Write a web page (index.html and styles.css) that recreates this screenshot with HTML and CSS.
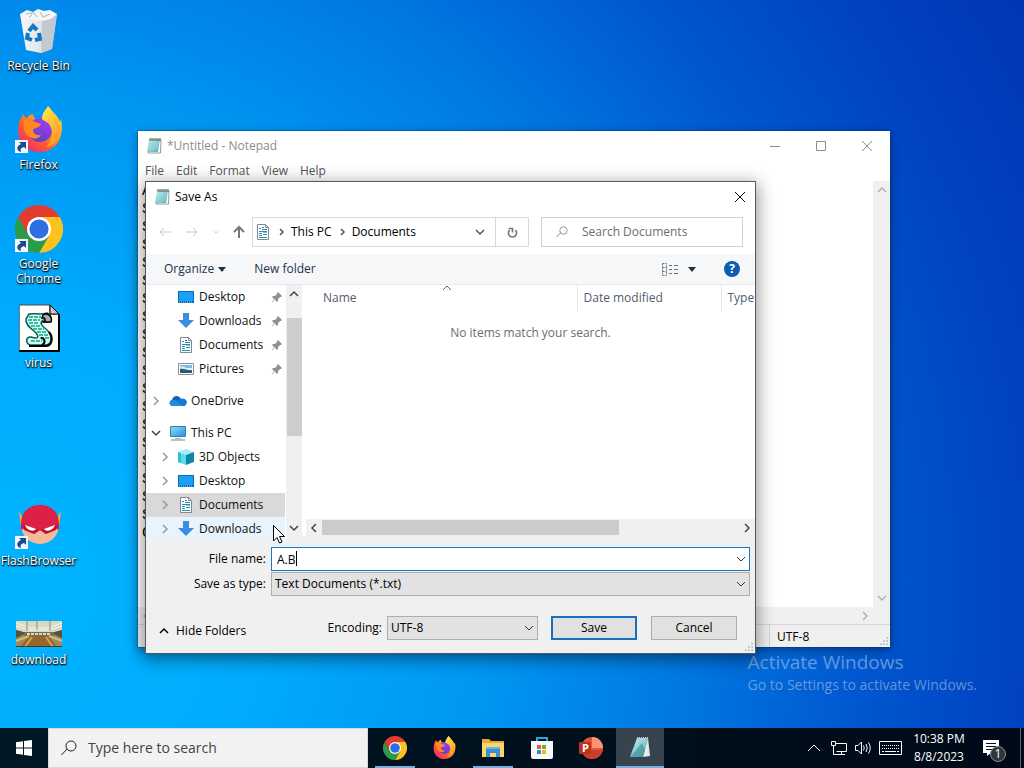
FILE: index.html
```html
<!DOCTYPE html>
<html lang="en">
<head>
  <meta charset="UTF-8">
  <meta name="viewport" content="width=device-width, initial-scale=1.0">
  <title>Desktop</title>
  <link rel="stylesheet" href="styles.css">
</head>
<body>
  <!-- Shared icons -->
  <svg class="sprite" aria-hidden="true">
    <defs>
      <linearGradient id="foxBody" x1="1" y1="0" x2="0.2" y2="1">
        <stop offset="0" stop-color="#fff14a"/>
        <stop offset="0.4" stop-color="#ffa52a"/>
        <stop offset="0.7" stop-color="#ff5a2c"/>
        <stop offset="1" stop-color="#f2237a"/>
      </linearGradient>
      <linearGradient id="foxTail" x1="0" y1="0" x2="0.6" y2="1">
        <stop offset="0" stop-color="#fff04a"/>
        <stop offset="1" stop-color="#ff9a24"/>
      </linearGradient>
      <linearGradient id="foxGlobe" x1="0.7" y1="0" x2="0.2" y2="1">
        <stop offset="0" stop-color="#a23cf0"/>
        <stop offset="1" stop-color="#5b3fc4"/>
      </linearGradient>
      <linearGradient id="padFill" x1="0" y1="0" x2="1" y2="1">
        <stop offset="0" stop-color="#c4eff0"/>
        <stop offset="1" stop-color="#58adb4"/>
      </linearGradient>
      <linearGradient id="binFill" x1="0" y1="0" x2="1" y2="0">
        <stop offset="0" stop-color="#f4f6f8"/>
        <stop offset="0.65" stop-color="#dfe3e8"/>
        <stop offset="1" stop-color="#b3bac2"/>
      </linearGradient>
      <linearGradient id="screenFill" x1="0" y1="0" x2="1" y2="1">
        <stop offset="0" stop-color="#8adcfb"/>
        <stop offset="1" stop-color="#2495dc"/>
      </linearGradient>
    </defs>

    <symbol id="i-bin" viewBox="0 0 48 48">
      <path d="M5 7 L42 7 L37 42 L26 46 L11 43 Z" fill="url(#binFill)"/>
      <path d="M27 12 L42 7 L37 42 L26 46 Z" fill="#c3c9d0"/>
      <path d="M5 7 L12 3 L18 5 L23 2 L29 4 L35 3 L42 7 L36 12 L27 14 L13 12 Z" fill="#f4f6f8"/>
      <path d="M11 7 L19 6 L22 10 M25 5 L28 10 L35 7 M14 10 L17 8" stroke="#a9b1ba" fill="none"/>
      <g fill="none" stroke="#1477c4" stroke-width="4">
        <path d="M14 24 L18 19 L22 23"/>
        <path d="M24 26 L25 32 L20 33"/>
        <path d="M17 33 L12 31 L13 26"/>
      </g>
    </symbol>

    <symbol id="i-firefox" viewBox="0 0 48 48">
      <path d="M4 17 C5 13 7 10 8 8 C9 10 10 12 12 12 C14 9 16 8 18 8 C18 11 20 13 23 14 L26 17 C27 7 32 3 33 0 C36 5 43 9 45 16 L46 13 C49 27 45 46 24 46 C10 46 0 34 4 17 Z" fill="url(#foxBody)"/>
      <circle cx="25" cy="24" r="12" fill="url(#foxGlobe)"/>
      <path d="M27 13 C27 6 32 3 33 0 C38 7 46 13 45 26 C44 35 38 40 31 41 C38 35 39 25 34 18 C31 15 29 15 27 13 Z" fill="url(#foxTail)"/>
      <path d="M8 15 C12 12 18 15 26 18 C25 22 20 21 18 24 C18 27 21 30 26 29 C23 35 11 33 9 23 Z" fill="#ff8a20"/>
    </symbol>

    <symbol id="i-chrome" viewBox="0 0 48 48">
      <path d="M24 12 H44.8 A24 24 0 0 1 24 48 L34.4 30 Z" fill="#fcc31e"/>
      <path d="M3.2 12 L13.6 30 L24 36 L34.4 30 L24 48 A24 24 0 0 1 3.2 12 Z" fill="#2c9b48"/>
      <path d="M3.2 12 A24 24 0 0 1 44.8 12 H24 L13.6 30 Z" fill="#e33b2e"/>
      <circle cx="24" cy="24" r="12" fill="#fff"/>
      <circle cx="24" cy="24" r="9.6" fill="#2d6fe0"/>
    </symbol>

    <symbol id="i-script" viewBox="0 0 48 48">
      <path d="M5 1 H35 L44 10 V47 H5 Z" fill="#fff"/>
      <path d="M4 1 H35 V10 H44" fill="none" stroke="#444"/>
      <path d="M35 1 L44 10 H35 Z" fill="#c8c8c8" stroke="#000"/>
      <path d="M44 10 V47 H4" fill="none" stroke="#000" stroke-width="2"/>
      <path d="M4 1 V47" stroke="#777"/>
      <path d="M14 10 C18 9 27 11 32 9 C36 10 37 17 34 18 H28 V16 C24 19 27 22 31 25 C37 30 38 40 31 41 H15 C10 39 11 32 16 33 C22 35 25 34 21 29 C17 25 10 21 11 15 Z" fill="#d3fbf2" stroke="#055f56" stroke-width="1.5"/>
      <path d="M14 13 H26 M13 16 H25 M14 19 H24 M16 22 H26 M18 25 H29 M22 28 H32 M24 31 H34 M25 34 H34 M16 37 H27" stroke="#0fa68c" stroke-width="1.5" stroke-dasharray="4 1"/>
      <path d="M28 11 C32 8 38 12 36 18 H29 C31 16 30 13 27 14 Z" fill="#aaa" stroke="#000" stroke-width="1.5"/>
      <path d="M34 28 C39 34 37 43 29 42 H14 M26 34 C30 34 31 39 27 41" fill="none" stroke="#000" stroke-width="2"/>
    </symbol>

    <symbol id="i-flash" viewBox="0 0 48 48">
      <path d="M4 9 L10 20 V28 L6 25 Z M46 9 L40 20 V28 L44 25 Z" fill="#f4b62a"/>
      <circle cx="25" cy="23" r="19" fill="#f6b998"/>
      <path d="M6 28 V22 C6 10 14 3 25 3 C36 3 44 10 44 22 V28 L39 25 L31 32 L25 28 L19 32 L11 25 Z" fill="#df2046"/>
      <path d="M6 22 L20 27 L25 28 L30 27 L44 22 L41 28 L31 32 L25 28 L19 32 L9 28 Z" fill="#b81538"/>
      <path d="M10 23 L21 27 C19 30 12 29 10 23 Z M40 23 L29 27 C31 30 38 29 40 23 Z" fill="#fff"/>
    </symbol>

    <symbol id="i-photo" viewBox="0 -5 48 48">
      <path d="M1 15 H47 V41 H1 Z" fill="#9c8a62"/>
      <path d="M1 15 H47 V24 L36 27 H12 L1 24 Z" fill="#d9d8c4"/>
      <path d="M1 17 L16 22 H32 L47 17 M1 20 L14 24 H34 L47 20" stroke="#f6f6ea" fill="none"/>
      <path d="M12 15 V25 M22 15 V24 M35 15 V25" stroke="#8a8c74"/>
      <path d="M1 24 L12 27 L1 32 Z M47 24 L36 27 L47 32 Z" fill="#55533e"/>
      <path d="M9 26 H39 V30 H9 Z" fill="#71705a"/>
      <path d="M12 28 H36" stroke="#ddd8bd" stroke-width="2" stroke-dasharray="3 1"/>
      <path d="M14 30 H34 L42 41 H5 Z" fill="#96662e"/>
      <path d="M17 31 L10 41 M31 31 L38 41" stroke="#d0a552" stroke-width="2"/>
      <path d="M1 35 L14 30 M47 35 L34 30" stroke="#d6bd7a" stroke-width="2"/>
      <path d="M1 40.500 H47" stroke="#4c3a1c"/>
    </symbol>

    <symbol id="i-shortcut" viewBox="0 0 13 13">
      <path d="M0 0 H13 V13 H0 Z" fill="#f5f8fb"/>
      <path d="M4 2 H11 V9 L9 7 C6 8 5 9 6 12 C1 11 1 6 6 4 Z" fill="#1b4a94"/>
    </symbol>

    <symbol id="i-notepad" viewBox="0 0 16 16">
      <path d="M4 2 H15 L14.500 15 H2 Z" fill="#fff" stroke="#8c9a9c"/>
      <path d="M3 2 H14 L12 14 H1 Z" fill="url(#padFill)"/>
      <path d="M4 0 V3 M6 0 V3 M8 0 V3 M10 0 V3 M12 0 V3 M14 0 V3" stroke="#47595c"/>
      <path d="M4 6 H12 M3 9 H12 M3 11 H11" stroke="#a4dfe1" stroke-width="0.6"/>
    </symbol>

    <symbol id="i-desktop" viewBox="0 0 16 16">
      <path d="M0 2 H16 V14 H0 Z" fill="#0a6cc0"/>
      <path d="M1 3 H15 V12 H1 Z" fill="#1ba0f5"/>
      <path d="M1 13 H15" stroke="#8fd0ff" stroke-dasharray="1 1"/>
    </symbol>

    <symbol id="i-download" viewBox="0 0 16 16">
      <path d="M5 0 H11 V7 H16 L8 15 L0 7 H5 Z" fill="#3b8ede"/>
    </symbol>

    <symbol id="i-doc" viewBox="0 0 16 16">
      <path d="M2.5 0.5 H10.500 L13.500 3.500 V15.500 H2.500 Z" fill="#fff" stroke="#7d8a8f"/>
      <path d="M10.500 0.500 V3.500 H13.500" fill="none" stroke="#7d8a8f"/>
      <path d="M4 4.500 H6 M7 3.500 H9 M7 5.500 H12 M4 7.500 H12 M4 9.500 H7 M8 10.500 H12 M4 11.500 H7 M4 13.500 H12" stroke="#2b8fb5"/>
      <path d="M8 8.500 H12" stroke="#7ac3c9"/>
    </symbol>

    <symbol id="i-picture" viewBox="0 0 16 16">
      <path d="M0.500 2.500 H15.500 V13.500 H0.500 Z" fill="#fff" stroke="#8b9196"/>
      <path d="M2 4 H14 V12 H2 Z" fill="#7cbdec"/>
      <path d="M2 6 C5 5 7 6 8 7 H14 V9 H2 Z" fill="#dff0fa"/>
      <path d="M2 8 C6 7 10 10 14 9 V12 H2 Z" fill="#2c5b78"/>
    </symbol>

    <symbol id="i-cloud" viewBox="0 0 18 16">
      <path d="M4 13 C0 13 -0.500 8 3 7 C4 3 9 1 12 6 C16 5 18 8 17.500 10 C17 12 16 13 14 13 Z" fill="#0a63b8"/>
      <path d="M3 7 C6 6 8 8 10 9 L16 13 H4 C0 13 -0.500 8 3 7 Z" fill="#1a8ee4"/>
      <path d="M12 6 C16 5 18 8 17.500 10 C17 12 16 13 14 13 L8 8 Z" fill="#1479cf"/>
    </symbol>

    <symbol id="i-pc" viewBox="0 0 18 16">
      <path d="M1.500 1.500 H16.500 V11.500 H1.500 Z" fill="url(#screenFill)" stroke="#377fa9"/>
      <path d="M6 13.500 H12" stroke="#a8b8c0"/>
      <path d="M2 15 H16" stroke="#77858d"/>
    </symbol>

    <symbol id="i-cube" viewBox="0 0 16 16">
      <path d="M8 0 L16 3 L8 6 L0 3 Z" fill="#a5eef5"/>
      <path d="M0 3 L8 6 V16 L0 13 Z" fill="#5fdbe6"/>
      <path d="M8 6 L16 3 V13 L8 16 Z" fill="#0f86a8"/>
      <path d="M0 3 L3 4 V14 L0 13 Z" fill="#2fbfd3"/>
    </symbol>

    <symbol id="i-pin" viewBox="0 0 12 12">
      <path d="M7 1 L11 5 L10 6 L9.500 5.700 L7 8 L7 10 L6 11 L3.800 8.600 L1 11.500 L0.500 11 L3.400 8.200 L1 6 L2 5 L4 5 L6.400 2.500 L6 2 Z" fill="#8a9299"/>
    </symbol>

    <symbol id="i-right" viewBox="0 0 10 10">
      <path d="M3 1 L7 5 L3 9" fill="none" stroke="currentColor" stroke-width="1.500"/>
    </symbol>
    <symbol id="i-crumb" viewBox="0 0 10 10">
      <path d="M4 2 L7 5 L4 8" fill="none" stroke="currentColor" stroke-width="1.500"/>
    </symbol>
    <symbol id="i-left" viewBox="0 0 10 10">
      <path d="M7 1 L3 5 L7 9" fill="none" stroke="currentColor" stroke-width="1.500"/>
    </symbol>
    <symbol id="i-down" viewBox="0 0 10 10">
      <path d="M1 3 L5 7 L9 3" fill="none" stroke="currentColor" stroke-width="1.500"/>
    </symbol>
    <symbol id="i-thin-down" viewBox="0 0 10 10">
      <path d="M1 3 L5 7 L9 3" fill="none" stroke="currentColor"/>
    </symbol>
    <symbol id="i-up" viewBox="0 0 10 10">
      <path d="M1 7 L5 3 L9 7" fill="none" stroke="currentColor" stroke-width="1.500"/>
    </symbol>
    <symbol id="i-thin-up" viewBox="0 0 10 10">
      <path d="M1 7 L5 3 L9 7" fill="none" stroke="currentColor"/>
    </symbol>
    <symbol id="i-caret" viewBox="0 0 8 5">
      <path d="M0 0 H8 L4 5 Z" fill="currentColor"/>
    </symbol>
    <symbol id="i-search" viewBox="0 0 16 16">
      <circle cx="10" cy="6" r="5" fill="none" stroke="currentColor"/>
      <path d="M6 9 L0.500 15" stroke="currentColor"/>
    </symbol>
    <symbol id="i-close" viewBox="0 0 12 12">
      <path d="M1 1 L11 11 M11 1 L1 11" stroke="currentColor"/>
    </symbol>
    <symbol id="i-grip" viewBox="0 0 10 10">
      <path d="M8 0h2v2h-2z M4 4h2v2h-2z M8 4h2v2h-2z M0 8h2v2h-2z M4 8h2v2h-2z M8 8h2v2h-2z" fill="#b4b4b4"/>
    </symbol>
  </svg>

  <div class="screen">
    <main class="desktop">
      <nav class="shortcuts" aria-label="Desktop icons">
        <a href="#" class="shortcut">
          <span class="shortcut-icon"><svg class="big"><use href="#i-bin"/></svg></span>
          Recycle Bin
        </a>
        <a href="#" class="shortcut">
          <span class="shortcut-icon"><svg class="big"><use href="#i-firefox"/></svg><svg class="arrow"><use href="#i-shortcut"/></svg></span>
          Firefox
        </a>
        <a href="#" class="shortcut">
          <span class="shortcut-icon"><svg class="big"><use href="#i-chrome"/></svg><svg class="arrow"><use href="#i-shortcut"/></svg></span>
          Google Chrome
        </a>
        <a href="#" class="shortcut">
          <span class="shortcut-icon"><svg class="big"><use href="#i-script"/></svg></span>
          virus
        </a>
        <a href="#" class="shortcut row-six">
          <span class="shortcut-icon"><svg class="big"><use href="#i-flash"/></svg><svg class="arrow"><use href="#i-shortcut"/></svg></span>
          FlashBrowser
        </a>
        <a href="#" class="shortcut row-seven">
          <span class="shortcut-icon"><svg class="big"><use href="#i-photo"/></svg></span>
          download
        </a>
      </nav>

      <div class="activate">
        <p class="activate-title">Activate Windows</p>
        <p>Go to Settings to activate Windows.</p>
      </div>

      <section class="window notepad" aria-label="Notepad">
        <header class="titlebar">
          <svg class="icon"><use href="#i-notepad"/></svg>
          <span class="title">*Untitled - Notepad</span>
          <button class="caption" aria-label="Minimize"><svg class="caption-icon" viewBox="0 0 12 12"><path d="M1 6.500 H11" stroke="currentColor"/></svg></button>
          <button class="caption" aria-label="Maximize"><svg class="caption-icon" viewBox="0 0 12 12"><path d="M1.500 1.500 H10.500 V10.500 H1.500 Z" fill="none" stroke="currentColor"/></svg></button>
          <button class="caption" aria-label="Close"><svg class="caption-icon"><use href="#i-close"/></svg></button>
        </header>
        <div class="menubar">
          <button>File</button>
          <button>Edit</button>
          <button>Format</button>
          <button>View</button>
          <button>Help</button>
        </div>
        <div class="editor">
          <textarea class="editor-text" aria-label="Text editor" spellcheck="false">A
S
S
S
S
S
S
S
S
S
S
S
S
S
S
S
S
S
S
C</textarea>
          <div class="vscroll pale">
            <svg class="chev"><use href="#i-up"/></svg>
            <svg class="chev"><use href="#i-down"/></svg>
          </div>
          <div class="hscroll pale">
            <svg class="chev"><use href="#i-left"/></svg>
            <svg class="chev"><use href="#i-right"/></svg>
          </div>
        </div>
        <footer class="statusbar">
          <span class="encoding">UTF-8</span>
          <svg class="grip"><use href="#i-grip"/></svg>
        </footer>
      </section>

      <section class="window dialog" role="dialog" aria-label="Save As">
        <header class="titlebar">
          <svg class="icon"><use href="#i-notepad"/></svg>
          <span class="title">Save As</span>
          <button class="caption" aria-label="Close"><svg class="caption-icon"><use href="#i-close"/></svg></button>
        </header>

        <div class="navbar">
          <div class="nav-buttons">
            <button class="faded" aria-label="Back"><svg class="arrow-icon" viewBox="0 0 14 14"><path d="M13 7 H2 M6 3 L2 7 L6 11" fill="none" stroke="currentColor"/></svg></button>
            <button class="faded" aria-label="Forward"><svg class="arrow-icon" viewBox="0 0 14 14"><path d="M1 7 H12 M8 3 L12 7 L8 11" fill="none" stroke="currentColor"/></svg></button>
            <button class="faded" aria-label="Recent locations"><svg class="tiny"><use href="#i-down"/></svg></button>
            <button aria-label="Up"><svg class="arrow-icon" viewBox="0 0 14 14"><path d="M7 13 V2 M2 7 L7 2 L12 7" fill="none" stroke="currentColor" stroke-width="2"/></svg></button>
          </div>
          <div class="address">
            <svg class="icon"><use href="#i-doc"/></svg>
            <svg class="chev"><use href="#i-crumb"/></svg>
            <a href="#">This PC</a>
            <svg class="chev"><use href="#i-crumb"/></svg>
            <a href="#">Documents</a>
            <button class="address-drop" aria-label="Previous locations"><svg class="chev"><use href="#i-down"/></svg></button>
            <button class="refresh" aria-label="Refresh"><svg class="refresh-icon" viewBox="0 0 16 16"><path d="M11.500 5 A5 5 0 1 1 4.500 5 M3 3 H8 V8" fill="none" stroke="currentColor" stroke-width="2"/></svg></button>
          </div>
          <label class="search">
            <svg class="search-icon"><use href="#i-search"/></svg>
            <input type="text" placeholder="Search Documents" aria-label="Search Documents">
          </label>
        </div>

        <div class="toolbar">
          <button>Organize <svg class="caret"><use href="#i-caret"/></svg></button>
          <button>New folder</button>
          <button class="view" aria-label="Change view">
            <svg class="view-icon" viewBox="0 0 18 13"><path d="M1.500 0.500 H5.500 V12.500 H1.500 Z M1.500 4.500 H5.500 M1.500 8.500 H5.500" fill="none" stroke="#6b7278" stroke-dasharray="2 1"/><path d="M8 2.500 H11 M8 6.500 H11 M8 10.500 H11 M13 2.500 H17 M13 6.500 H17 M13 10.500 H17" stroke="#6b7278"/></svg>
            <svg class="caret"><use href="#i-caret"/></svg>
          </button>
          <button class="help" aria-label="Help">?</button>
        </div>

        <div class="browser">
          <ul class="tree">
            <li class="child"><svg class="icon"><use href="#i-desktop"/></svg>Desktop<svg class="pin"><use href="#i-pin"/></svg></li>
            <li class="child"><svg class="icon"><use href="#i-download"/></svg>Downloads<svg class="pin"><use href="#i-pin"/></svg></li>
            <li class="child"><svg class="icon"><use href="#i-doc"/></svg>Documents<svg class="pin"><use href="#i-pin"/></svg></li>
            <li class="child"><svg class="icon"><use href="#i-picture"/></svg>Pictures<svg class="pin"><use href="#i-pin"/></svg></li>
            <li class="root"><svg class="chev"><use href="#i-right"/></svg><svg class="icon wide"><use href="#i-cloud"/></svg>OneDrive</li>
            <li class="root open"><svg class="chev"><use href="#i-down"/></svg><svg class="icon wide"><use href="#i-pc"/></svg>This PC</li>
            <li class="branch"><svg class="chev"><use href="#i-right"/></svg><svg class="icon"><use href="#i-cube"/></svg>3D Objects</li>
            <li class="branch"><svg class="chev"><use href="#i-right"/></svg><svg class="icon"><use href="#i-desktop"/></svg>Desktop</li>
            <li class="branch selected"><svg class="chev"><use href="#i-right"/></svg><svg class="icon"><use href="#i-doc"/></svg>Documents</li>
            <li class="branch hovered"><svg class="chev"><use href="#i-right"/></svg><svg class="icon"><use href="#i-download"/></svg>Downloads</li>
          </ul>
          <div class="vscroll tree-scroll">
            <svg class="chev"><use href="#i-up"/></svg>
            <div class="vthumb"></div>
            <svg class="chev"><use href="#i-down"/></svg>
          </div>
          <div class="files">
            <div class="files-view">
              <svg class="sort"><use href="#i-thin-up"/></svg>
              <table>
                <thead>
                  <tr><th>Name</th><th class="date">Date modified</th><th class="type">Type</th></tr>
                </thead>
                <tbody>
                  <tr><td colspan="3">No items match your search.</td></tr>
                </tbody>
              </table>
            </div>
            <div class="hscroll">
              <svg class="chev"><use href="#i-left"/></svg>
              <div class="hthumb"></div>
              <svg class="chev"><use href="#i-right"/></svg>
            </div>
          </div>
        </div>

        <form class="form">
          <label for="fileName">File name:</label>
          <div class="field">
            <input id="fileName" type="text" value="A.B">
            <svg class="field-chev"><use href="#i-thin-down"/></svg>
            <span class="text-cursor"></span>
          </div>
          <label for="fileType">Save as type:</label>
          <div class="field">
            <select id="fileType"><option>Text Documents (*.txt)</option></select>
            <svg class="field-chev"><use href="#i-thin-down"/></svg>
          </div>
        </form>

        <footer class="actions">
          <button class="hide-folders"><svg class="chev"><use href="#i-up"/></svg>Hide Folders</button>
          <label for="encoding">Encoding:</label>
          <div class="field encoding-field">
            <select id="encoding"><option>UTF-8</option></select>
            <svg class="field-chev"><use href="#i-thin-down"/></svg>
          </div>
          <button class="push primary">Save</button>
          <button class="push">Cancel</button>
        </footer>
        <svg class="grip"><use href="#i-grip"/></svg>
      </section>

      <svg class="pointer" viewBox="0 0 12 19"><path d="M0.500 0.500 V16 L4 12.500 L6.500 18 L9 17 L6.500 11.500 H11.500 Z" fill="#fff" stroke="#000"/></svg>
    </main>

    <footer class="taskbar">
      <button class="start" aria-label="Start"><svg class="icon" viewBox="0 0 16 16"><path d="M0 2.200 L7 1.200 V7.500 H0 Z M8 1 L16 0 V7.500 H8 Z M0 8.500 H7 V14.800 L0 13.800 Z M8 8.500 H16 V16 L8 15 Z" fill="#fff"/></svg></button>
      <label class="task-search">
        <svg class="icon"><use href="#i-search"/></svg>
        <input type="text" placeholder="Type here to search" aria-label="Type here to search">
      </label>
      <div class="apps">
        <button class="app running" aria-label="Chrome"><svg class="app-icon"><use href="#i-chrome"/></svg></button>
        <button class="app" aria-label="Firefox"><svg class="app-icon"><use href="#i-firefox"/></svg></button>
        <button class="app running" aria-label="File Explorer">
          <svg class="app-icon" viewBox="0 0 24 24"><path d="M1 3 H8 L10 5 H23 V21 H1 Z" fill="#e8a93a"/><path d="M1 7 H23 V21 H1 Z" fill="#fbd76a"/><path d="M5 13 H19 V21 H15 V17 H9 V21 H5 Z" fill="#3e8fd0"/><path d="M5 11 H19 V13 H5 Z" fill="#68b2e8"/></svg>
        </button>
        <button class="app" aria-label="Microsoft Store">
          <svg class="app-icon" viewBox="0 0 24 24"><path d="M7 6 V2 H17 V6" fill="none" stroke="#2aa3e6" stroke-width="2"/><path d="M1 5 H23 V21 Q23 23 21 23 H3 Q1 23 1 21 Z" fill="#f7f9fb"/><path d="M7 9h4v4h-4z" fill="#ec5a2a"/><path d="M12 9h4v4h-4z" fill="#76b02a"/><path d="M7 14h4v4h-4z" fill="#2290dd"/><path d="M12 14h4v4h-4z" fill="#f5b51d"/></svg>
        </button>
        <button class="app" aria-label="PowerPoint">
          <svg class="app-icon" viewBox="0 0 24 24"><circle cx="13" cy="12" r="11" fill="#e0543a"/><path d="M13 1 A11 11 0 0 1 24 12 H13 Z" fill="#ff9273"/><path d="M3 14 H24 A11 11 0 0 1 3 16 Z" fill="#c9402a"/><rect x="0" y="6" width="12" height="12" rx="1" fill="#b9321c"/><text x="3" y="16" class="ppt-letter">P</text></svg>
        </button>
        <button class="app running active" aria-label="Notepad"><svg class="app-icon" viewBox="0 0 24 24"><path d="M9 2 H20 L15 21 H2 Z" fill="url(#padFill)"/><path d="M20 2 L22 20 L15 21 Z" fill="#e3f0f0"/><path d="M9 2 H20" stroke="#c2d4d6" stroke-width="2" stroke-dasharray="1 1"/><path d="M2 21 L14 7 L17 14 L15 21 Z" fill="#2b7f8c" opacity="0.500"/></svg></button>
      </div>
      <div class="tray">
        <svg class="tray-up" viewBox="0 0 14 14"><path d="M1 10 L7 4 L13 10" fill="none" stroke="#fff"/></svg>
        <svg class="icon" viewBox="0 0 16 16"><path d="M4.500 3.500 H15.500 V11.500 H5.500 M10.500 11.500 V14 M6 14.500 H14" fill="none" stroke="#fff"/><path d="M0.500 1.500 H4.500 V5.500 H0.500 Z M2.500 5.500 V14.500 H6" fill="none" stroke="#fff"/></svg>
        <svg class="icon" viewBox="0 0 16 16"><path d="M0.500 5.500 H3 L6.500 2 V14 L3 10.500 H0.500 Z M8.500 5.500 Q10 8 8.500 10.500 M11 4 Q13.500 8 11 12 M13.500 2.500 Q17 8 13.500 13.500" fill="none" stroke="#fff"/></svg>
        <svg class="keyboard" viewBox="0 0 23 14"><path d="M0.500 0.500 H22.500 V13.500 H0.500 Z" fill="none" stroke="#fff"/><path d="M3 4.500 H20 M3 7.500 H20" stroke="#fff" stroke-dasharray="1 1"/><path d="M3 10.500 H5 M6 10.500 H17 M18 10.500 H20" stroke="#fff"/></svg>
        <time class="clock">10:38 PM<br>8/8/2023</time>
        <button class="notices" aria-label="1 notification">
          <svg class="note-icon" viewBox="0 0 18 18"><path d="M1 1 H17 V14 H9 L5 17 V14 H1 Z" fill="#fff"/><path d="M4 4.500 H14 M4 7.500 H14 M4 10.500 H11" stroke="#000f1c"/></svg>
          <span class="badge">1</span>
        </button>
      </div>
    </footer>
  </div>
</body>
</html>
```
FILE: styles.css
```css
* {
  box-sizing: border-box;
}
body {
  margin: 0;
  font-family: "Open Sans", "Noto Sans", sans-serif;
  font-size: 12px;
  line-height: 16px;
  color: #000;
}
button, input, select {
  font: inherit;
  color: inherit;
  margin: 0;
  padding: 0;
  border: 0;
  border-radius: 0;
  background: none;
}
button {
  display: flex;
  align-items: center;
  justify-content: center;
}
a {
  color: inherit;
  text-decoration: none;
}
svg {
  display: block;
  flex: none;
}
.sprite {
  position: absolute;
  width: 0;
  height: 0;
}
.icon {
  width: 16px;
  height: 16px;
}
.icon.wide {
  width: 18px;
}
.chev {
  width: 10px;
  height: 10px;
}

/* Desktop */
.screen {
  display: flex;
  flex-direction: column;
  min-height: 100vh;
}
.desktop {
  position: relative;
  flex: 1;
  overflow: hidden;
  background: radial-gradient(circle at 0% 80%, #00b4ff 0%, #00acfe 22%, #0096f2 42%, #0079e2 58%, #0056cf 74%, #0042c2 87%, #0036b4 100%);
}
.shortcuts {
  display: grid;
  grid-auto-rows: 99px;
  width: 77px;
}
.shortcut {
  display: flex;
  flex-direction: column;
  align-items: center;
  padding-top: 7px;
  color: #fff;
  line-height: 15px;
  text-align: center;
  text-shadow: 1px 1px 2px #000, 0 1px 1px #000;
}
.row-six {
  grid-row: 6;
}
.row-seven {
  grid-row: 7;
}
.shortcut-icon {
  position: relative;
  margin-bottom: 3px;
}
.big {
  width: 48px;
  height: 48px;
}
.arrow {
  position: absolute;
  left: 0;
  bottom: 1px;
  width: 13px;
  height: 13px;
}
.activate {
  position: absolute;
  right: 47px;
  bottom: 32px;
  color: rgba(190, 205, 225, 0.55);
  font-size: 14px;
  line-height: 22px;
}
.activate p {
  margin: 0;
}
.activate .activate-title {
  font-size: 19px;
  line-height: 24px;
}

/* Windows */
.window {
  position: absolute;
  display: flex;
  flex-direction: column;
}
.notepad {
  left: 138px;
  right: 134px;
  top: 131px;
  bottom: 81px;
  background: #fff;
  box-shadow: 0 0 0 1px rgba(0, 50, 100, 0.3), 0 3px 10px rgba(0, 0, 0, 0.4);
}
.dialog {
  left: 145px;
  right: 268px;
  top: 181px;
  bottom: 74px;
  background: #f0f0f0;
  border: 1px solid #55585c;
  box-shadow: 0 4px 16px 2px rgba(0, 0, 0, 0.4);
}
.titlebar {
  display: flex;
  align-items: center;
  height: 30px;
  padding-left: 8px;
  background: #fff;
}
.title {
  flex: 1;
  padding-left: 5px;
}
.caption {
  width: 46px;
  height: 30px;
}
.caption-icon {
  width: 12px;
  height: 12px;
}
.dialog .caption {
  width: 30px;
}
.notepad .titlebar {
  color: #8c8c8c;
}
.menubar {
  display: flex;
  gap: 12px;
  height: 20px;
  padding-left: 7px;
  color: #555;
}
.editor {
  flex: 1;
  display: grid;
  grid-template-columns: 1fr 17px;
  grid-template-rows: 1fr 17px;
  background: #f0f0f0;
}
.editor-text {
  margin: 0;
  padding: 2px 0 0 4px;
  border: 0;
  outline: 0;
  resize: none;
  overflow: hidden;
  background: #fff;
  color: #000;
  font: 15px/18px "Liberation Mono", monospace;
}
.statusbar {
  display: flex;
  justify-content: flex-end;
  height: 23px;
  background: #f0f0f0;
  border-top: 1px solid #d7d7d7;
}
.encoding {
  width: 121px;
  padding: 4px 0 0 7px;
  border-left: 1px solid #d7d7d7;
}
.grip {
  position: absolute;
  right: 2px;
  bottom: 2px;
  width: 8px;
  height: 8px;
}

/* Scrollbars */
.vscroll, .hscroll {
  display: flex;
  align-items: center;
  justify-content: space-between;
  background: #f0f0f0;
  color: #444;
}
.vscroll {
  flex-direction: column;
  width: 17px;
  padding: 4px 0;
}
.tree-scroll {
  width: 16px;
  padding-bottom: 8px;
}
.hscroll {
  height: 17px;
  padding: 0 3px;
}
.pale {
  color: #b0b0b0;
}
.vthumb {
  flex: none;
  width: 15px;
  height: 118px;
  margin-bottom: 68px;
  background: #cdcdcd;
}
.hthumb {
  width: 67%;
  height: 15px;
  margin-right: 27%;
  background: #cbcbcb;
}

/* Save dialog */
.navbar {
  display: flex;
  align-items: center;
  padding: 5px 12px 7px;
  background: #fff;
}
.nav-buttons {
  display: flex;
  align-items: center;
  justify-content: space-between;
  width: 88px;
  margin-right: 6px;
  color: #777;
}
.faded {
  color: #c8c8c8;
}
.arrow-icon {
  width: 14px;
  height: 14px;
}
.tiny {
  width: 6px;
  height: 6px;
}
.address {
  flex: 1;
  display: flex;
  align-items: center;
  gap: 5px;
  height: 30px;
  margin-right: 12px;
  padding-left: 2px;
  border: 1px solid #d9d9d9;
}
.address .chev {
  color: #555;
}
.address-drop {
  width: 30px;
  height: 28px;
  margin-left: auto;
}
.refresh {
  width: 33px;
  height: 28px;
  margin-left: -5px;
  border-left: 1px solid #d9d9d9;
  color: #777;
}
.refresh-icon {
  width: 13px;
  height: 13px;
}
.search {
  display: flex;
  align-items: center;
  width: 202px;
  height: 30px;
  padding-left: 14px;
  border: 1px solid #d0d0d0;
}
.search-icon {
  width: 12px;
  height: 12px;
  margin-right: 14px;
  color: #777;
}
.search input {
  flex: 1;
  min-width: 0;
  outline: 0;
}
.search input::placeholder {
  color: #6d6d6d;
  opacity: 1;
}
.toolbar {
  display: flex;
  align-items: center;
  gap: 28px;
  height: 31px;
  padding: 0 15px 0 18px;
  background: #f5f7f9;
  border-bottom: 1px solid #e8eaec;
  color: #1e3247;
}
.toolbar button {
  gap: 4px;
}
.caret {
  width: 8px;
  height: 5px;
}
.toolbar .view {
  gap: 9px;
  margin-left: auto;
}
.view-icon {
  width: 18px;
  height: 13px;
}
.toolbar .help {
  width: 16px;
  height: 16px;
  border-radius: 50%;
  background: #0c5fb0;
  color: #fff;
  font-weight: bold;
}
.browser {
  flex: 1;
  display: flex;
  min-height: 0;
  background: #fff;
}
.tree {
  width: 139px;
  margin: 0 1px 0 0;
  padding: 0;
  list-style: none;
  overflow: hidden;
}
.tree li {
  display: flex;
  align-items: center;
  height: 24px;
  color: #111;
}
.tree .icon {
  margin-right: 5px;
}
.tree .icon.wide {
  margin-right: 4px;
}
.tree .chev {
  margin-right: 8px;
  color: #999;
}
.tree .child {
  padding-left: 32px;
}
.tree .root {
  margin: 8px 0;
  padding-left: 5px;
}
.tree .open {
  margin: 0;
}
.tree .open .chev {
  color: #444;
}
.tree .branch {
  padding-left: 14px;
}
.tree .selected {
  background: #d9d9d9;
}
.tree .hovered {
  background: #e8f3fc;
}
.pin {
  width: 12px;
  height: 12px;
  margin: 0 2px 0 auto;
}
.files {
  flex: 1;
  display: flex;
  flex-direction: column;
  min-width: 0;
  padding: 0 0 5px 4px;
  background: linear-gradient(#f0f0f0, #f0f0f0) bottom / 100% 5px no-repeat;
}
.files-view {
  position: relative;
  flex: 1;
}
.sort {
  position: absolute;
  left: 136px;
  top: -2px;
  width: 10px;
  height: 10px;
  color: #666;
}
.files table {
  width: 100%;
  table-layout: fixed;
  border-collapse: collapse;
}
.files th {
  height: 26px;
  padding: 0 0 0 6px;
  color: #51606f;
  font-weight: normal;
  text-align: left;
  border-right: 1px solid #e5e5e5;
}
.files th:first-child {
  padding-left: 17px;
}
.files th:last-child {
  border-right: 0;
}
.files .date {
  width: 144px;
}
.files .type {
  width: 34px;
}
.files td {
  padding: 14px 0;
  color: #6d6d6d;
  text-align: center;
}
.form {
  display: grid;
  grid-template-columns: 120px 1fr;
  gap: 1px 5px;
  align-items: center;
  padding: 6px 5px 0 0;
}
.form label {
  text-align: right;
}
.field {
  position: relative;
}
.field input, .field select {
  display: block;
  width: 100%;
  height: 24px;
  border: 1px solid #adadad;
  background: #e2e2e2;
  appearance: none;
  padding: 0 20px 0 3px;
}
.field input {
  padding-left: 5px;
  border-color: #1a78c2;
  background: #fff;
  outline: 0;
}
.field-chev {
  position: absolute;
  right: 4px;
  top: 7px;
  width: 10px;
  height: 10px;
  color: #333;
}
.text-cursor {
  position: absolute;
  left: 25px;
  top: 4px;
  width: 1px;
  height: 15px;
  background: #000;
}
.actions {
  display: flex;
  align-items: center;
  padding: 20px 18px 13px 13px;
}
.hide-folders {
  gap: 7px;
  margin-right: auto;
  padding-top: 6px;
}
.encoding-field {
  width: 151px;
  margin: 0 13px 0 5px;
}
.push {
  width: 86px;
  height: 24px;
  border: 1px solid #adadad;
  background: #e1e1e1;
}
.push.primary {
  margin-right: 14px;
  border: 2px solid #1a6fb8;
}
.pointer {
  position: absolute;
  left: 273px;
  top: 525px;
  width: 12px;
  height: 19px;
}

/* Taskbar */
.taskbar {
  display: flex;
  height: 40px;
  background: linear-gradient(90deg, #001826, #000f1c 60%, #000a18);
  color: #fff;
}
.start {
  width: 48px;
}
.task-search {
  display: flex;
  align-items: center;
  gap: 11px;
  width: 320px;
  padding-left: 12px;
  background: #f2f2f2;
  border: 1px solid #d5d9dc;
  color: #222;
}
.task-search input {
  flex: 1;
  min-width: 0;
  outline: 0;
  font-size: 14px;
  line-height: 20px;
}
.task-search input::placeholder {
  color: #444;
  opacity: 1;
}
.apps {
  display: flex;
  gap: 1px;
  padding-left: 3px;
}
.app {
  width: 48px;
}
.app-icon {
  width: 24px;
  height: 24px;
}
.running {
  background: linear-gradient(#76aee0, #76aee0) bottom / 40px 2px no-repeat;
}
.running.active {
  background: linear-gradient(#76aee0, #76aee0) bottom / 100% 2px no-repeat #37444f;
}
.ppt-letter {
  fill: #fff;
  font-size: 11px;
  font-weight: bold;
}
.tray {
  display: flex;
  align-items: center;
  gap: 8px;
  margin-left: auto;
  margin-right: 3px;
  padding-right: 14px;
  border-right: 1px solid #59636c;
}
.tray-up {
  width: 14px;
  height: 14px;
  margin-right: 2px;
}
.keyboard {
  width: 23px;
  height: 14px;
}
.clock {
  width: 58px;
  line-height: 18px;
  text-align: center;
}
.notices {
  position: relative;
  width: 24px;
  height: 28px;
  margin-left: 6px;
  justify-content: flex-start;
}
.note-icon {
  width: 18px;
  height: 18px;
}
.badge {
  position: absolute;
  right: 0;
  bottom: 0;
  width: 16px;
  height: 16px;
  border: 1px solid #8a8f94;
  border-radius: 50%;
  background: #30363d;
  line-height: 14px;
}
```
